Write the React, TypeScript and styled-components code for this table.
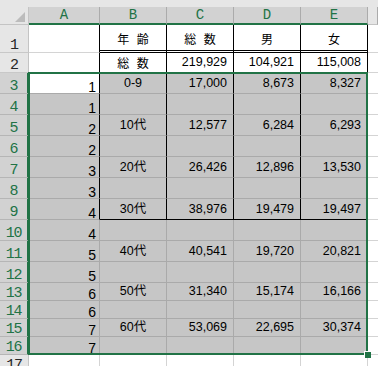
import React from 'react';
import styled, { createGlobalStyle, css } from 'styled-components';

const GREEN = '#217346';
const GRID = '#d4d4d4';
const GRID_SEL = '#aaaaaa';
const COLS = '29px 71px 67px 67px 67px 67px 1fr';

const GlobalStyle = createGlobalStyle`
  html, body {
    margin: 0;
    padding: 0;
    background: #ffffff;
    overflow: hidden;
  }
`;

const Sheet = styled.div`
  position: relative;
  width: 378px;
  height: 366px;
  overflow: hidden;
  background: #ffffff;
`;

const TopStrip = styled.div`
  height: 7px;
  background: #e6e6e6;
`;

const HeaderRow = styled.div`
  display: grid;
  grid-template-columns: ${COLS};
  height: 18px;
`;

const Corner = styled.div`
  box-sizing: border-box;
  display: flex;
  align-items: flex-end;
  justify-content: flex-end;
  padding: 0 3px 2px 0;
  background: #e6e6e6;
  border-right: 1px solid #c4c4c4;
  border-bottom: 1px solid #c4c4c4;
`;

interface SelProps {
  $sel?: boolean;
}

const ColHead = styled.div<SelProps>`
  box-sizing: border-box;
  display: flex;
  align-items: center;
  justify-content: center;
  background: ${(p) => (p.$sel ? '#d2d2d2' : '#e6e6e6')};
  border-right: 1px solid #ababab;
  border-bottom: ${(p) => (p.$sel ? `2px solid ${GREEN}` : '1px solid #c4c4c4')};
  color: ${(p) => (p.$sel ? GREEN : '#444444')};
  font-family: 'Liberation Mono', monospace;
  font-size: 14px;
  line-height: 1;
`;

const Row = styled.div<{ $h: number }>`
  display: grid;
  grid-template-columns: ${COLS};
  height: ${(p) => p.$h}px;
`;

const RowHead = styled.div<SelProps>`
  box-sizing: border-box;
  display: flex;
  align-items: flex-end;
  justify-content: center;
  background: ${(p) => (p.$sel ? '#d2d2d2' : '#e6e6e6')};
  border-right: ${(p) => (p.$sel ? `2px solid ${GREEN}` : '1px solid #c4c4c4')};
  border-bottom: 1px solid ${(p) => (p.$sel ? '#b6b6b6' : '#c8c8c8')};
  color: ${(p) => (p.$sel ? GREEN : '#262626')};
  font-family: 'Liberation Mono', monospace;
  font-size: 15px;
  line-height: 12px;
  letter-spacing: -1.2px;
  white-space: nowrap;
`;

type Kind = 'idx' | 'num' | 'band' | 'jp' | 'none';

interface CellProps {
  $bg: string;
  $rb: string;
  $bb: string;
  $kind: Kind;
  $pt?: number;
}

const kinds = {
  idx: css`
    justify-content: flex-end;
    align-items: flex-end;
    padding-right: 3px;
    font-family: 'Liberation Sans', sans-serif;
    font-size: 14px;
    line-height: 12px;
  `,
  num: css`
    justify-content: flex-end;
    align-items: center;
    padding-right: 6px;
    font-family: 'Liberation Sans', 'Noto Sans CJK JP', sans-serif;
    font-size: 12.5px;
    line-height: 1;
  `,
  band: css`
    justify-content: center;
    align-items: center;
    font-family: 'Liberation Sans', 'Noto Sans CJK JP', sans-serif;
    font-size: 12.5px;
    line-height: 1;
  `,
  jp: css`
    justify-content: center;
    align-items: center;
    font-family: 'Noto Sans CJK JP', sans-serif;
    font-size: 12px;
    line-height: 1;
    word-spacing: 5px;
  `,
  none: css``,
};

const Cell = styled.div<CellProps>`
  box-sizing: border-box;
  display: flex;
  min-width: 0;
  overflow: hidden;
  white-space: nowrap;
  color: #000000;
  background: ${(p) => p.$bg};
  border-right: ${(p) => p.$rb};
  border-bottom: ${(p) => p.$bb};
  padding-top: ${(p) => p.$pt || 0}px;
  ${(p) => kinds[p.$kind]}
`;

const Selection = styled.div`
  position: absolute;
  left: 28px;
  top: 72px;
  width: 340px;
  height: 283px;
  box-sizing: border-box;
  border: 2px solid ${GREEN};
  pointer-events: none;
`;

const FillHandle = styled.div`
  position: absolute;
  left: 364px;
  top: 351px;
  width: 7px;
  height: 7px;
  box-sizing: border-box;
  background: ${GREEN};
  border: 1px solid #ffffff;
  border-right: none;
  border-bottom: none;
`;

interface RowData {
  n: number;
  h: number;
  a?: string;
  vals?: string[];
}

const rows: RowData[] = [
  { n: 1, h: 28, vals: ['年 齢', '総 数', '男', '女'] },
  { n: 2, h: 20, vals: ['総 数', '219,929', '104,921', '115,008'] },
  { n: 3, h: 21, a: '1', vals: ['0-9', '17,000', '8,673', '8,327'] },
  { n: 4, h: 21, a: '1' },
  { n: 5, h: 21, a: '2', vals: ['10代', '12,577', '6,284', '6,293'] },
  { n: 6, h: 21, a: '2' },
  { n: 7, h: 21, a: '3', vals: ['20代', '26,426', '12,896', '13,530'] },
  { n: 8, h: 21, a: '3' },
  { n: 9, h: 21, a: '4', vals: ['30代', '38,976', '19,479', '19,497'] },
  { n: 10, h: 21, a: '4' },
  { n: 11, h: 21, a: '5', vals: ['40代', '40,541', '19,720', '20,821'] },
  { n: 12, h: 21, a: '5' },
  { n: 13, h: 18, a: '6', vals: ['50代', '31,340', '15,174', '16,166'] },
  { n: 14, h: 18, a: '6' },
  { n: 15, h: 18, a: '7', vals: ['60代', '53,069', '22,695', '30,374'] },
  { n: 16, h: 18, a: '7' },
  { n: 17, h: 18 },
];

const letters = ['A', 'B', 'C', 'D', 'E', ''];

const renderCell = (r: RowData, ci: number) => {
  const selRow = r.n >= 3 && r.n <= 16;
  const sel = selRow && ci <= 4;
  const active = r.n === 3 && ci === 0;
  const grid = sel ? GRID_SEL : GRID;
  const bg = sel && !active ? '#c6c6c6' : '#ffffff';

  let rb = `1px solid ${grid}`;
  if (ci <= 4 && r.n <= 9) rb = '1px solid #000000';
  if (ci === 5) rb = 'none';

  let bb = `1px solid ${grid}`;
  if (ci >= 1 && ci <= 4) {
    if (r.n === 1) bb = '3px double #000000';
    if (r.n === 2 || r.n === 9) bb = '1px solid #000000';
  }

  let kind: Kind = 'none';
  let text = '';
  if (ci === 0 && r.a) {
    kind = 'idx';
    text = r.a;
  } else if (ci >= 1 && ci <= 4 && r.vals) {
    text = r.vals[ci - 1];
    if (r.n === 1 || (r.n === 2 && ci === 1)) kind = 'jp';
    else if (ci === 1) kind = 'band';
    else kind = 'num';
  }

  return (
    <Cell key={ci} $bg={bg} $rb={rb} $bb={bb} $kind={kind} $pt={r.n === 1 ? 3 : 0}>
      {text}
    </Cell>
  );
};

const App = () => (
  <Sheet>
    <GlobalStyle />
    <TopStrip />
    <HeaderRow>
      <Corner>
        <svg width="10" height="10" viewBox="0 0 10 10">
          <polygon points="10,0 10,10 0,10" fill="#bcbcbc" />
        </svg>
      </Corner>
      {letters.map((l, i) => (
        <ColHead key={i} $sel={i <= 4}>{l}</ColHead>
      ))}
    </HeaderRow>
    {rows.map((r) => (
      <Row key={r.n} $h={r.h}>
        <RowHead $sel={r.n >= 3 && r.n <= 16}>{r.n}</RowHead>
        {[0, 1, 2, 3, 4, 5].map((ci) => renderCell(r, ci))}
      </Row>
    ))}
    <Selection />
    <FillHandle />
  </Sheet>
);

export default App;
